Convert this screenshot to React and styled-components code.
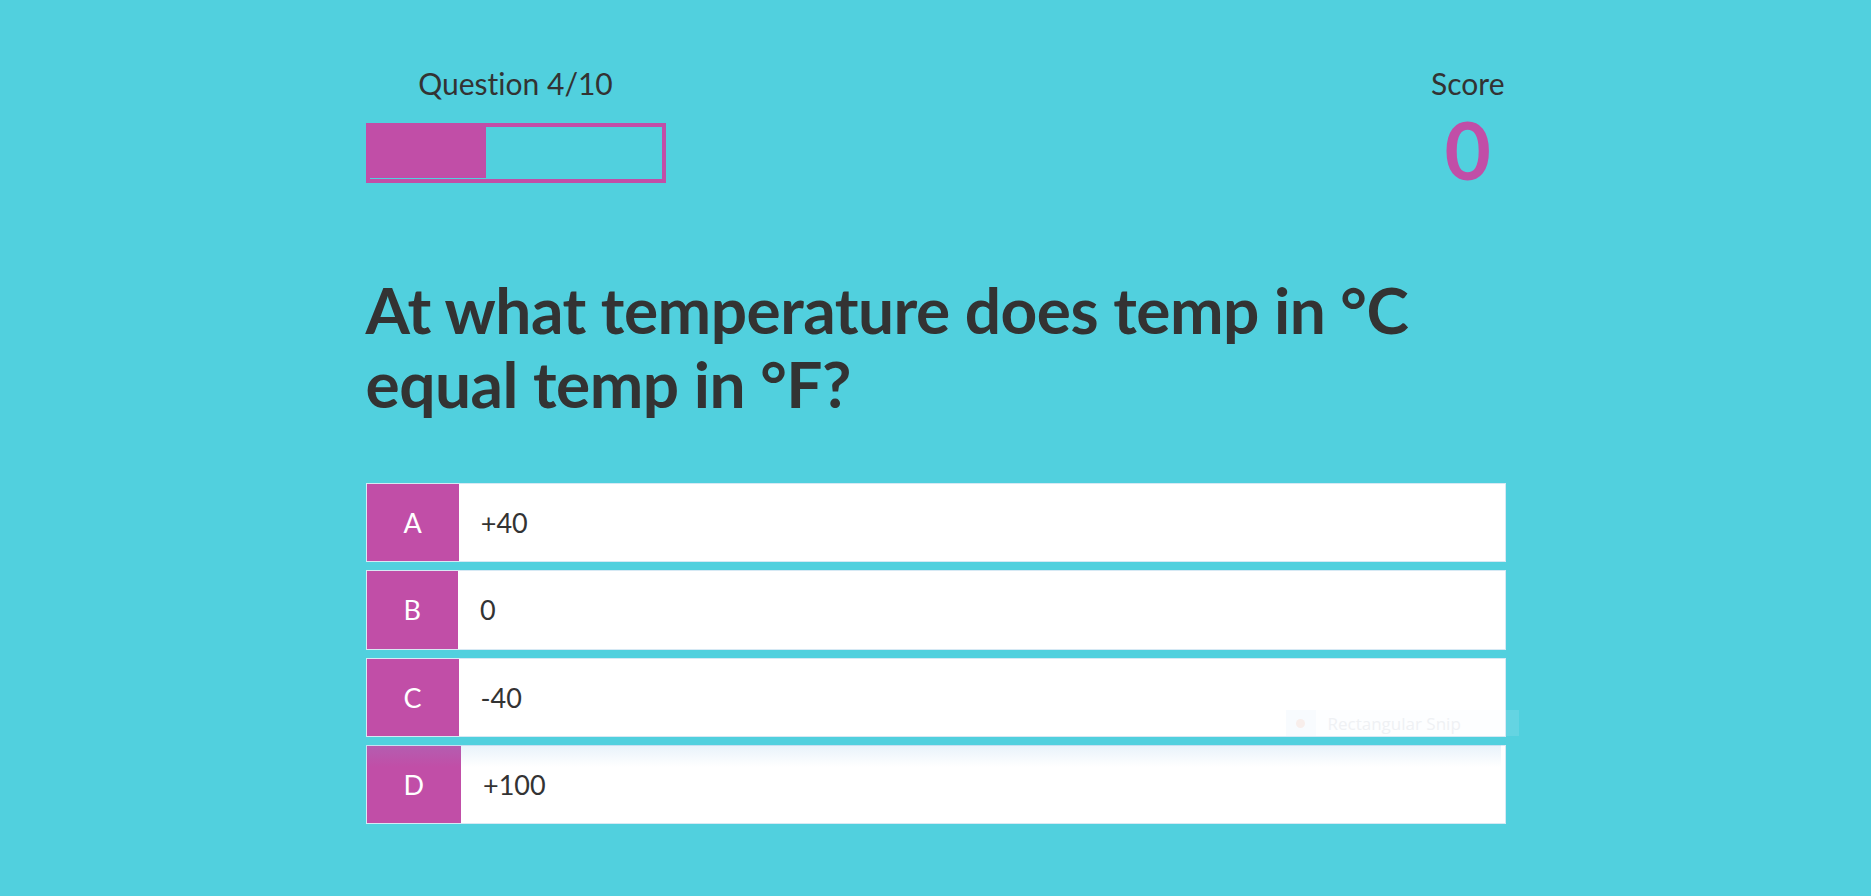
import React from "react";
import styled, { createGlobalStyle } from "styled-components";

const CYAN = "#51d0de";
const MAGENTA = "#c14ea7";
const INK = "#333333";

const GlobalStyle = createGlobalStyle`
  html, body {
    margin: 0;
    padding: 0;
    background: ${CYAN};
    font-family: Lato, "Open Sans", "Liberation Sans", sans-serif;
    font-variant-ligatures: no-common-ligatures;
    color: ${INK};
  }
  * { box-sizing: border-box; }
`;

const Page = styled.main`
  position: relative;
  width: 1140px;
  margin: 0 auto;
  padding-top: 65px;
  min-height: 896px;
`;

const Header = styled.header`
  display: flex;
  justify-content: space-between;
  align-items: flex-start;
`;

const ProgressColumn = styled.div`
  display: flex;
  flex-direction: column;
  width: 300px;
`;

const HudLabel = styled.p`
  margin: 0;
  font-size: 30px;
  line-height: 36px;
  font-weight: 400;
  text-align: center;
  color: ${INK};
`;

const ProgressBar = styled.div`
  margin-top: 22px;
  width: 300px;
  height: 60px;
  border: 4px solid ${MAGENTA};
`;

const ProgressFill = styled.div`
  height: 51px;
  background: ${MAGENTA};
`;

const ScoreColumn = styled.div`
  display: flex;
  flex-direction: column;
  align-items: center;
  margin-right: 1px;
`;

const ScoreValue = styled.p`
  margin: 0;
  font-size: 80px;
  line-height: 96px;
  font-weight: 700;
  color: ${MAGENTA};
`;

const QuestionText = styled.h1`
  margin: 76px 0 62px;
  font-size: 64px;
  line-height: 74px;
  letter-spacing: -0.5px;
  font-weight: 700;
  color: ${INK};
  max-width: 1100px;
`;

const Choices = styled.ul`
  list-style: none;
  margin: 0;
  padding: 0;
  display: flex;
  flex-direction: column;
  gap: 8px;
`;

const Choice = styled.li`
  display: flex;
  align-items: stretch;
  height: 79.3px;
  background: #ffffff;
  border: 1px solid #d6e9f4;
  font-size: 27px;
  cursor: pointer;
`;

const ChoicePrefix = styled.span`
  display: flex;
  align-items: center;
  justify-content: center;
  padding: 0 37px;
  background: ${MAGENTA};
  color: #ffffff;
`;

const ChoiceText = styled.span`
  display: flex;
  align-items: center;
  padding-left: 22px;
  color: ${INK};
`;

const SnipBar = styled.div`
  position: absolute;
  left: 920px;
  top: 710px;
  width: 233px;
  height: 26px;
  display: flex;
  align-items: center;
  background: rgba(240, 246, 252, 0.12);
  pointer-events: none;
`;

const SnipIcon = styled.span`
  display: flex;
  align-items: center;
  justify-content: center;
  width: 30px;
  height: 100%;
  background: rgba(236, 244, 250, 0.25);
  &::after {
    content: "";
    width: 9px;
    height: 9px;
    border-radius: 50%;
    background: #f8eeeb;
  }
`;

const SnipText = styled.span`
  margin-left: 12px;
  font-family: "Open Sans", "Noto Sans", sans-serif;
  font-size: 17px;
  color: #eff1f4;
`;

const SnipShadow = styled.div`
  position: absolute;
  left: 0;
  top: 745px;
  width: 1135px;
  height: 22px;
  background: linear-gradient(
    to bottom,
    rgba(110, 175, 225, 0.16),
    rgba(110, 175, 225, 0)
  );
  pointer-events: none;
`;

const choices = [
  { key: "A", text: "+40" },
  { key: "B", text: "0" },
  { key: "C", text: "-40" },
  { key: "D", text: "+100" },
];

export default function App() {
  const current = 4;
  const total = 10;
  return (
    <>
      <GlobalStyle />
      <Page>
        <Header>
          <ProgressColumn>
            <HudLabel>
              Question {current}/{total}
            </HudLabel>
            <ProgressBar>
              <ProgressFill style={{ width: `${(current / total) * 100}%` }} />
            </ProgressBar>
          </ProgressColumn>
          <ScoreColumn>
            <HudLabel>Score</HudLabel>
            <ScoreValue>0</ScoreValue>
          </ScoreColumn>
        </Header>
        <QuestionText>
          At what temperature does temp in °C equal temp in °F?
        </QuestionText>
        <Choices>
          {choices.map((c) => (
            <Choice key={c.key}>
              <ChoicePrefix>{c.key}</ChoicePrefix>
              <ChoiceText>{c.text}</ChoiceText>
            </Choice>
          ))}
        </Choices>
        <SnipBar>
          <SnipIcon />
          <SnipText>Rectangular Snip</SnipText>
        </SnipBar>
        <SnipShadow />
      </Page>
    </>
  );
}
